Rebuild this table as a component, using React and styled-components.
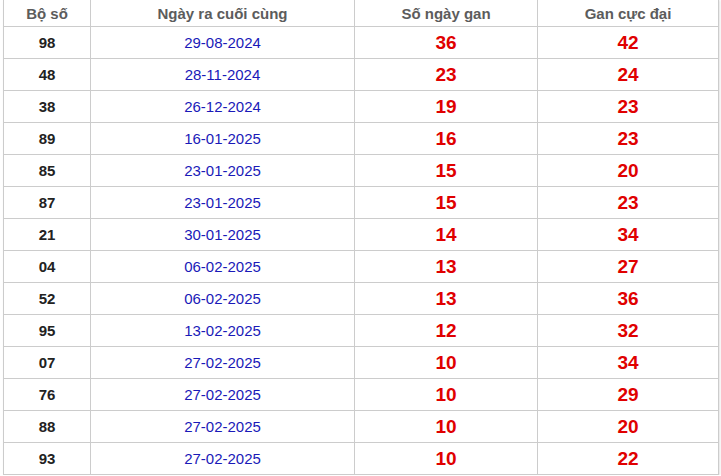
import React from "react";
import styled, { createGlobalStyle } from "styled-components";

const GlobalStyle = createGlobalStyle`
  body {
    margin: 0;
    background: #fff;
    font-family: "Liberation Sans", Arial, sans-serif;
  }
`;

const rows = [
  ["98", "29-08-2024", 36, 42],
  ["48", "28-11-2024", 23, 24],
  ["38", "26-12-2024", 19, 23],
  ["89", "16-01-2025", 16, 23],
  ["85", "23-01-2025", 15, 20],
  ["87", "23-01-2025", 15, 23],
  ["21", "30-01-2025", 14, 34],
  ["04", "06-02-2025", 13, 27],
  ["52", "06-02-2025", 13, 36],
  ["95", "13-02-2025", 12, 32],
  ["07", "27-02-2025", 10, 34],
  ["76", "27-02-2025", 10, 29],
  ["88", "27-02-2025", 10, 20],
  ["93", "27-02-2025", 10, 22],
];

function App() {
  return (
    <Wrapper>
      <GlobalStyle />
      <Table>
        <colgroup>
          <col style={{ width: 87 }} />
          <col style={{ width: 264 }} />
          <col style={{ width: 183 }} />
          <col style={{ width: 181 }} />
        </colgroup>
        <thead>
          <tr>
            <Th>Bộ số</Th>
            <Th>Ngày ra cuối cùng</Th>
            <Th>Số ngày gan</Th>
            <Th>Gan cực đại</Th>
          </tr>
        </thead>
        <tbody>
          {rows.map(([num, date, gan, max]) => (
            <tr key={num}>
              <NumCell>{num}</NumCell>
              <DateCell>{date}</DateCell>
              <RedCell>{gan}</RedCell>
              <RedCell>{max}</RedCell>
            </tr>
          ))}
        </tbody>
      </Table>
    </Wrapper>
  );
}
export default App;

const Wrapper = styled.div`
  padding: 0 0 0 3px;
  margin-top: -1px;
`;

const Table = styled.table`
  width: 716px;
  border-collapse: collapse;
  table-layout: fixed;
  border: 1px solid #ccc;
  box-shadow: 1px 1px 2px #e4e4e4;
`;

const Th = styled.th`
  height: 26px;
  padding: 0;
  border: 1px solid #ccc;
  color: #5c5c5c;
  font-size: 15px;
  font-weight: bold;
  text-align: center;
`;

const Cell = styled.td`
  height: 31px;
  padding: 0;
  border: 1px solid #ccc;
  text-align: center;
`;

const NumCell = styled(Cell)`
  color: #222;
  font-size: 15px;
  font-weight: bold;
`;

const DateCell = styled(Cell)`
  color: #1a1ab8;
  font-size: 15px;
`;

const RedCell = styled(Cell)`
  color: #e00000;
  font-size: 19px;
  font-weight: bold;
`;
